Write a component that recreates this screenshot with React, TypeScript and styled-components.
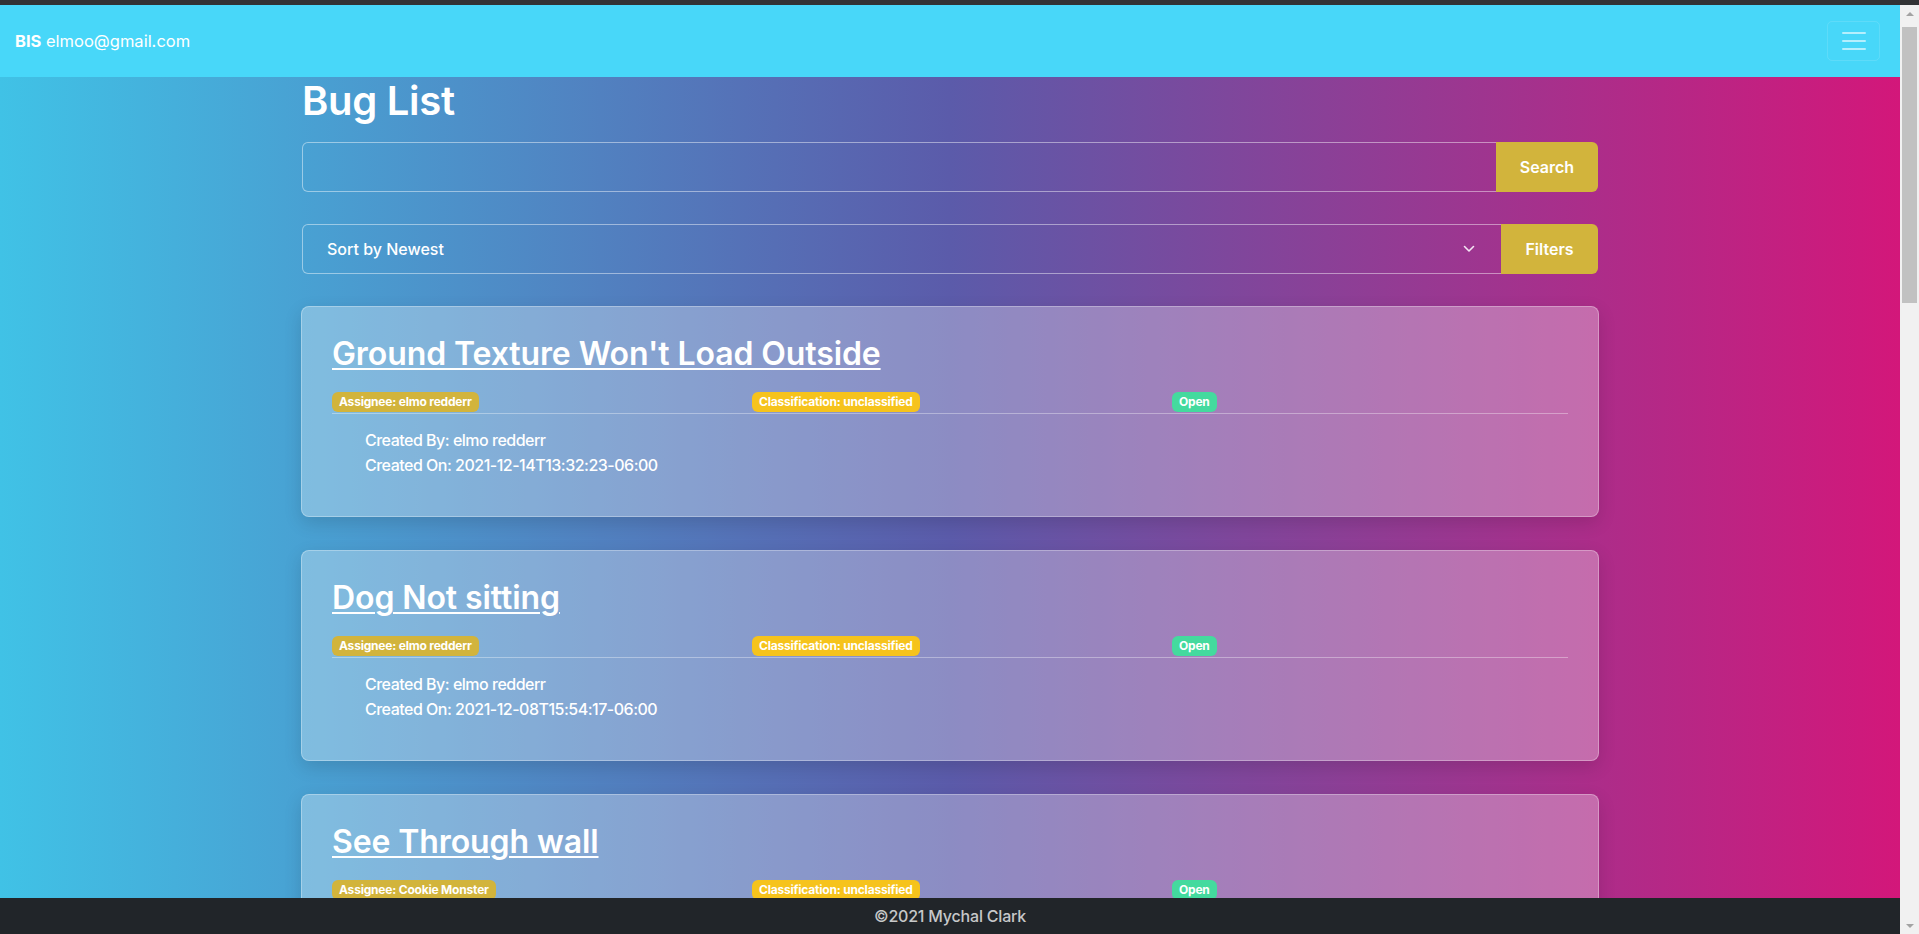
import * as React from "react";
import styled, { createGlobalStyle } from "styled-components";

const GlobalStyle = createGlobalStyle`
  html, body {
    margin: 0;
    padding: 0;
    height: 100%;
    overflow: hidden;
  }
  body {
    font-family: Inter, "Noto Sans", "Liberation Sans", sans-serif;
    color: #fff;
  }
  * {
    box-sizing: border-box;
  }
`;

const bugs = [
  {
    id: 1,
    title: "Ground Texture Won't Load Outside",
    assignee: "elmo redderr",
    classification: "unclassified",
    status: "Open",
    createdBy: "elmo redderr",
    createdOn: "2021-12-14T13:32:23-06:00",
  },
  {
    id: 2,
    title: "Dog Not sitting",
    assignee: "elmo redderr",
    classification: "unclassified",
    status: "Open",
    createdBy: "elmo redderr",
    createdOn: "2021-12-08T15:54:17-06:00",
  },
  {
    id: 3,
    title: "See Through wall",
    assignee: "Cookie Monster",
    classification: "unclassified",
    status: "Open",
    createdBy: "elmo redderr",
    createdOn: "2021-12-08T15:40:02-06:00",
  },
];

const Shell = styled.div`
  height: 100vh;
  display: flex;
  flex-direction: column;
`;

const TopStrip = styled.div`
  height: 5px;
  flex-shrink: 0;
  background: #323335;
`;

const Viewport = styled.div`
  flex: 1;
  min-height: 0;
  display: flex;
`;

const Page = styled.div`
  flex: 1;
  min-width: 0;
  display: flex;
  flex-direction: column;
  background: linear-gradient(to right, #40c2e6 0%, #5b5baa 50%, #d3177a 100%);
`;

const Navbar = styled.nav`
  height: 72px;
  flex-shrink: 0;
  display: flex;
  align-items: center;
  justify-content: space-between;
  padding: 0 20px 0 15px;
  background: #48d7f9;
`;

const Brand = styled.a`
  font-size: 16.5px;
  color: #fff;
  text-decoration: none;

  b {
    font-weight: 700;
  }
`;

const Toggler = styled.button`
  width: 53px;
  height: 40px;
  display: flex;
  flex-direction: column;
  align-items: center;
  justify-content: center;
  gap: 6px;
  background: transparent;
  border: 1px solid rgba(255, 255, 255, 0.12);
  border-radius: 5px;
  padding: 0;

  span {
    display: block;
    width: 24px;
    height: 2px;
    border-radius: 1px;
    background: rgba(255, 255, 255, 0.6);
  }
`;

const Main = styled.main`
  flex: 1;
  min-height: 0;
  overflow: hidden;
`;

const Container = styled.div`
  width: 1320px;
  margin: 0 auto;
  padding: 0 12px;
`;

const PageTitle = styled.h1`
  margin: 0 0 17px;
  font-size: 40px;
  line-height: 48px;
  font-weight: 600;
  letter-spacing: -0.3px;
`;

const InputGroup = styled.div<{ $top?: number }>`
  display: flex;
  height: 50px;
  margin-top: ${(p) => p.$top ?? 0}px;
`;

const Field = styled.div`
  flex: 1;
  position: relative;
  display: flex;
  align-items: center;
  padding: 0 24px;
  border: 1px solid rgba(255, 255, 255, 0.45);
  border-right: none;
  border-radius: 6px 0 0 6px;
  font-size: 16px;
  font-weight: 500;
`;

const SearchInput = styled.input`
  flex: 1;
  height: 100%;
  border: none;
  outline: none;
  background: transparent;
  color: #fff;
  font: inherit;
  padding: 0;
`;

const Chevron = styled.svg`
  position: absolute;
  right: 26px;
  top: 50%;
  margin-top: -4px;
`;

const GoldButton = styled.button<{ $width: number }>`
  width: ${(p) => p.$width}px;
  border: none;
  border-radius: 0 6px 6px 0;
  background: #d2b43c;
  color: #fff;
  font-family: inherit;
  font-size: 16px;
  font-weight: 600;
`;

const CardList = styled.div`
  margin-top: 32px;
  display: flex;
  flex-direction: column;
  gap: 33px;
`;

const Card = styled.section`
  margin: 0 -1px;
  padding: 28px 30px 38px;
  border: 1px solid rgba(255, 255, 255, 0.3);
  border-radius: 8px;
  background: rgba(255, 255, 255, 0.3);
  box-shadow: 0 6px 18px rgba(0, 0, 0, 0.13);
`;

const CardTitle = styled.a`
  display: inline-block;
  font-size: 32px;
  line-height: 38px;
  font-weight: 600;
  letter-spacing: -0.1px;
  color: #fff;
  text-decoration: underline;
  text-decoration-thickness: 2px;
  text-underline-offset: 3px;
`;

const BadgeRow = styled.div`
  margin-top: 19px;
  display: grid;
  grid-template-columns: repeat(3, 1fr);
  column-gap: 24px;
  border-bottom: 1px solid rgba(255, 255, 255, 0.35);
  padding-bottom: 1px;
`;

const Badge = styled.span<{ $bg: string }>`
  justify-self: start;
  display: inline-block;
  padding: 4px 7px;
  border-radius: 6px;
  background: ${(p) => p.$bg};
  font-size: 12px;
  line-height: 12px;
  font-weight: 700;
  letter-spacing: -0.2px;
  color: #fff;
`;

const Details = styled.ul`
  list-style: none;
  margin: 14px 0 0;
  padding-left: 33px;
  font-size: 16px;
  line-height: 25px;
  font-weight: 500;
  letter-spacing: -0.5px;
`;

const Footer = styled.footer`
  height: 36px;
  flex-shrink: 0;
  display: flex;
  align-items: center;
  justify-content: center;
  background: #212529;
  color: rgba(255, 255, 255, 0.75);
  font-size: 16px;
  font-weight: 500;
  letter-spacing: -0.2px;
`;

const Scrollbar = styled.div`
  width: 19px;
  flex-shrink: 0;
  display: flex;
  flex-direction: column;
  background: #f1f1f1;
`;

const ScrollArrow = styled.div<{ $down?: boolean }>`
  height: 17px;
  display: flex;
  align-items: center;
  justify-content: center;

  &::before {
    content: "";
    border-left: 4px solid transparent;
    border-right: 4px solid transparent;
    ${(p) =>
      p.$down ? "border-top: 4px solid #a3a3a3;" : "border-bottom: 4px solid #a3a3a3;"}
  }
`;

const ScrollTrack = styled.div`
  flex: 1;
  padding: 5px 2px 0;
`;

const Thumb = styled.div`
  height: 276px;
  background: #c1c1c1;
`;

const badgeColors = {
  assignee: "#d2b43c",
  classification: "#f6c31c",
  open: "#44da9e",
};

const BugCard = ({ bug }) => (
  <Card>
    <CardTitle href="#">{bug.title}</CardTitle>
    <BadgeRow>
      <Badge $bg={badgeColors.assignee}>Assignee: {bug.assignee}</Badge>
      <Badge $bg={badgeColors.classification}>
        Classification: {bug.classification}
      </Badge>
      <Badge $bg={badgeColors.open}>{bug.status}</Badge>
    </BadgeRow>
    <Details>
      <li>Created By: {bug.createdBy}</li>
      <li>Created On: {bug.createdOn}</li>
    </Details>
  </Card>
);

export default function App() {
  return (
    <Shell>
      <GlobalStyle />
      <TopStrip />
      <Viewport>
        <Page>
          <Navbar>
            <Brand href="#">
              <b>BIS</b> elmoo@gmail.com
            </Brand>
            <Toggler aria-label="Toggle navigation">
              <span />
              <span />
              <span />
            </Toggler>
          </Navbar>
          <Main>
            <Container>
              <PageTitle>Bug List</PageTitle>
              <InputGroup>
                <Field>
                  <SearchInput type="text" />
                </Field>
                <GoldButton $width={102}>Search</GoldButton>
              </InputGroup>
              <InputGroup $top={32}>
                <Field>
                  Sort by Newest
                  <Chevron width="12" height="8" viewBox="0 0 12 8">
                    <polyline
                      points="1.5,1.5 6,6 10.5,1.5"
                      fill="none"
                      stroke="#f4e6f4"
                      strokeWidth="1.6"
                      strokeLinecap="round"
                      strokeLinejoin="round"
                    />
                  </Chevron>
                </Field>
                <GoldButton $width={97}>Filters</GoldButton>
              </InputGroup>
              <CardList>
                {bugs.map((bug) => (
                  <BugCard key={bug.id} bug={bug} />
                ))}
              </CardList>
            </Container>
          </Main>
          <Footer>©2021 Mychal Clark</Footer>
        </Page>
        <Scrollbar>
          <ScrollArrow />
          <ScrollTrack>
            <Thumb />
          </ScrollTrack>
          <ScrollArrow $down />
        </Scrollbar>
      </Viewport>
    </Shell>
  );
}
